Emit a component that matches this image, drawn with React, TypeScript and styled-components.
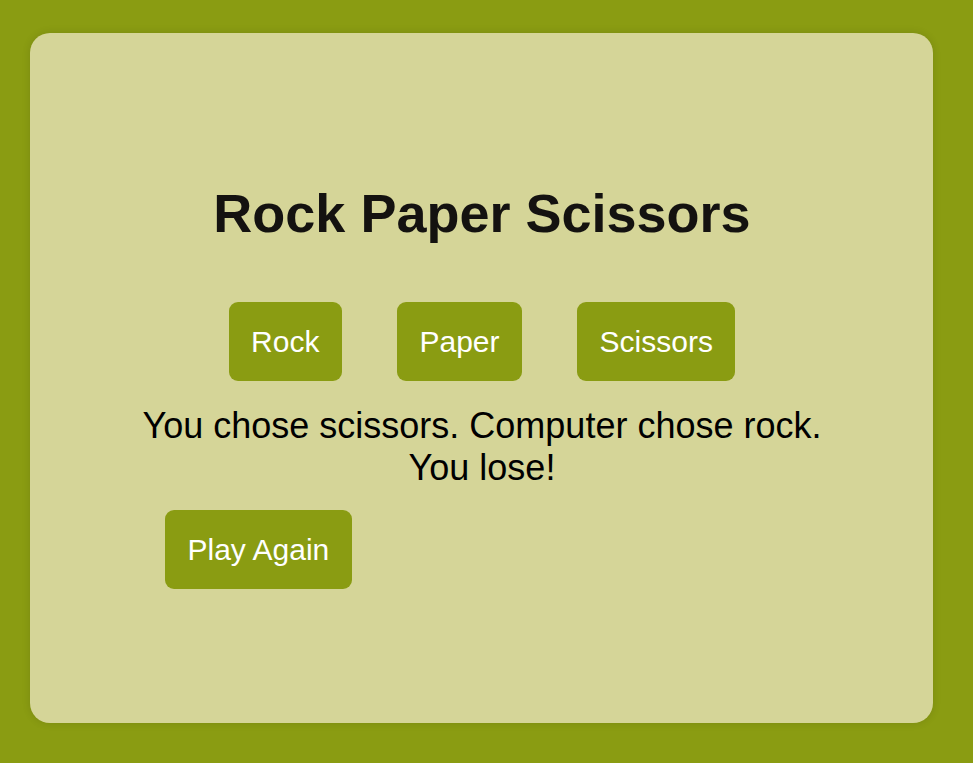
import React, { useState } from "react";
import styled, { createGlobalStyle } from "styled-components";

const GlobalStyle = createGlobalStyle`
  html, body {
    margin: 0;
    padding: 0;
    background: #8a9c12;
  }
  body {
    font-family: "Liberation Sans", Arial, sans-serif;
  }
`;

const Page = styled.div`
  box-sizing: border-box;
  width: 973px;
  height: 763px;
  padding: 33px 40px 40px 30px;
  background: #8a9c12;
  display: flex;
`;

const Card = styled.main`
  flex: 1;
  background: #d5d598;
  border-radius: 20px;
  box-shadow: 0 0 8px rgba(0, 0, 0, 0.12);
  display: flex;
  flex-direction: column;
  align-items: center;
  padding-top: 149px;
  padding-left: 1px;
`;

const Title = styled.h1`
  margin: 0;
  font-size: 54px;
  font-weight: 700;
  line-height: normal;
  color: #141210;
`;

const ChoiceRow = styled.div`
  display: flex;
  gap: 55px;
  margin-top: 58px;
`;

const GameButton = styled.button`
  font-family: "Liberation Sans", Arial, sans-serif;
  font-size: 30px;
  line-height: normal;
  padding: 0.75em;
  border: none;
  border-radius: 9px;
  background: #8a9c12;
  color: #ffffff;
  cursor: pointer;
`;

const Message = styled.p`
  margin: 24px 0 0;
  max-width: 700px;
  font-size: 36px;
  line-height: normal;
  text-align: center;
  color: #000000;
`;

const ActionRow = styled.div`
  align-self: stretch;
  display: flex;
  padding-left: 134px;
  margin-top: 21px;
`;

const choices = ["Rock", "Paper", "Scissors"];

export default function App() {
  const [message] = useState("You chose scissors. Computer chose rock. You lose!");
  return (
    <>
      <GlobalStyle />
      <Page>
        <Card>
          <Title>Rock Paper Scissors</Title>
          <ChoiceRow>
            {choices.map((c) => (
              <GameButton key={c}>{c}</GameButton>
            ))}
          </ChoiceRow>
          <Message>{message}</Message>
          <ActionRow>
            <GameButton>Play Again</GameButton>
          </ActionRow>
        </Card>
      </Page>
    </>
  );
}
